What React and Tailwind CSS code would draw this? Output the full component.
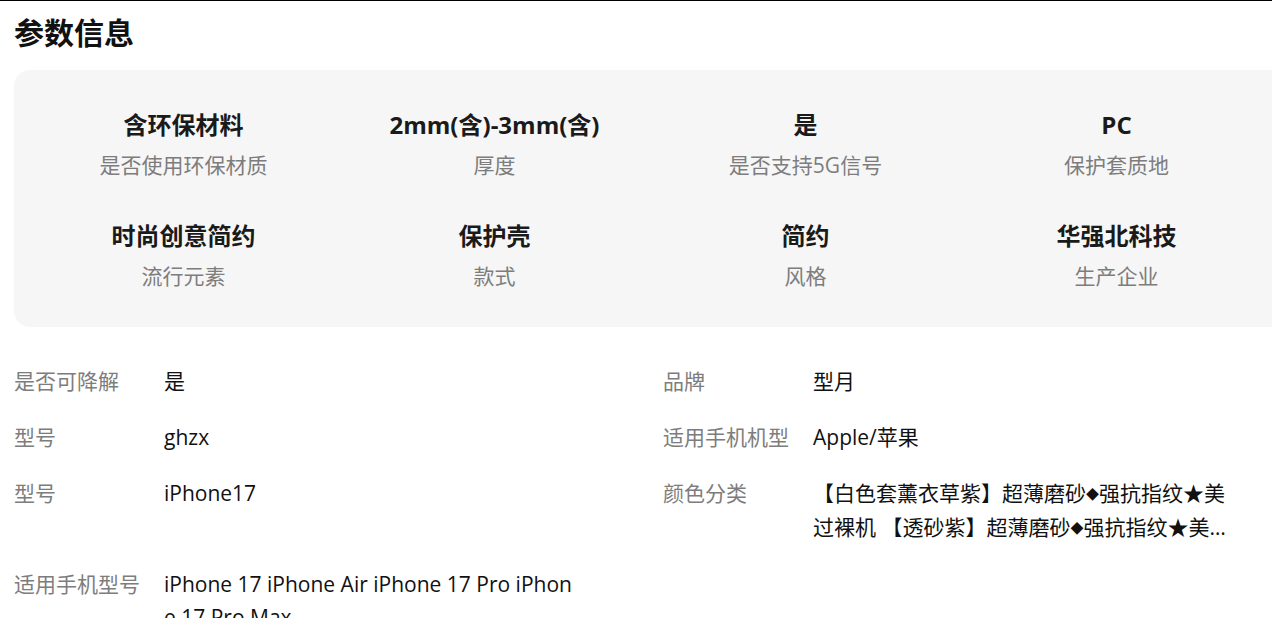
export default function App() {
  const stats = [
    ["含环保材料", "是否使用环保材质"],
    ["2mm(含)-3mm(含)", "厚度"],
    ["是", "是否支持5G信号"],
    ["PC", "保护套质地"],
    ["时尚创意简约", "流行元素"],
    ["保护壳", "款式"],
    ["简约", "风格"],
    ["华强北科技", "生产企业"],
  ];
  const D = <span className="text-[13px] align-[2px]">◆</span>;
  const colorValue = (
    <>
      【白色套薰衣草紫】超薄磨砂{D}强抗指纹★美过裸机 【透砂紫】超薄磨砂{D}强抗指纹★美过裸机 【黑色】超薄磨砂{D}强抗指纹★美过裸机
    </>
  );
  const rows = [
    ["是否可降解", "是"],
    ["品牌", "型月"],
    ["型号", "ghzx"],
    ["适用手机机型", "Apple/苹果"],
    ["型号", "iPhone17"],
    ["颜色分类", colorValue, true],
    ["适用手机型号", "iPhone 17 iPhone Air iPhone 17 Pro iPhone 17 Pro Max"],
    ["", ""],
  ];
  const font = { fontFamily: '"Open Sans", "Noto Sans CJK SC", sans-serif' };
  return (
    <div className="h-[618px] w-full overflow-hidden bg-white" style={font}>
      <div className="h-px w-full bg-black" />
      <h1 className="ml-[14px] mt-[12px] text-[30px] leading-[40px] font-bold text-[#111]">参数信息</h1>
      <div className="ml-[14px] mt-[17px] w-[1272px] rounded-2xl bg-[#f6f6f6] px-[14px] pt-[38px] pb-[36px] grid grid-cols-[repeat(4,311px)] gap-y-[39px]">
        {stats.map(([v, l], i) => (
          <div key={i} className="flex flex-col items-center">
            <div className="text-[24px] leading-[34px] font-bold text-[#1a1a1a] whitespace-nowrap">{v}</div>
            <div className="mt-[8px] text-[21px] leading-[30px] text-[#7d7d7d] whitespace-nowrap">{l}</div>
          </div>
        ))}
      </div>
      <div className="ml-[14px] mt-[38px] grid grid-cols-[649px_649px] gap-y-[23px]">
        {rows.map(([l, v, clamp], i) => (
          <div key={i} className="flex text-[21px] leading-[33px]">
            <div className="w-[150px] shrink-0 text-[#7d7d7d]">{l}</div>
            <div className={"w-[416px] break-all text-[#111] " + (clamp ? "line-clamp-2" : "")}>{v}</div>
          </div>
        ))}
      </div>
    </div>
  );
}
